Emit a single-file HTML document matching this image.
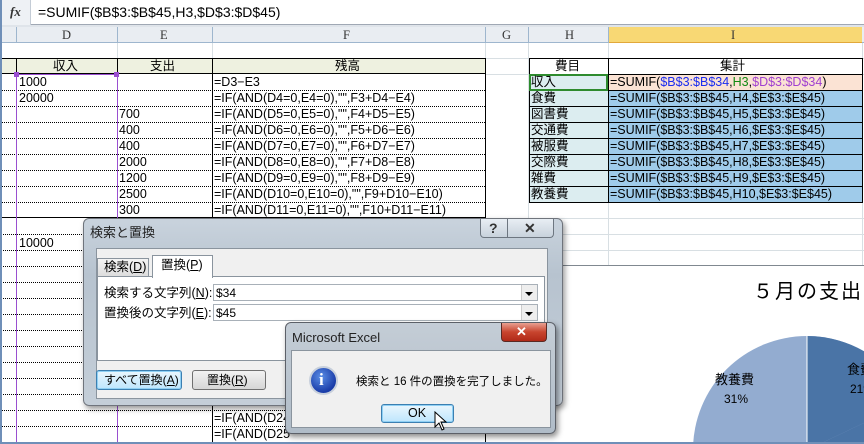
<!DOCTYPE html>
<html><head><meta charset="utf-8"><style>
*{margin:0;padding:0;box-sizing:border-box}
html,body{width:864px;height:444px;overflow:hidden}
body{background:#fff;position:relative;font-family:"Liberation Sans","Noto Sans CJK JP",sans-serif;font-size:12px;color:#000}
.a{position:absolute}
.t{position:absolute;white-space:nowrap;font-size:12.5px;line-height:16px}
.hl{position:absolute;height:0;border-top:1px dotted #000}
.vl{position:absolute;width:0;border-left:1px solid #000}
.g{position:absolute;background:#d8dfe3}
</style></head><body>
<div class="a" style="left:0;top:0;width:864px;height:25px;background:#fff;border-bottom:1px solid #a0a8b4"></div>
<div class="a" style="left:0;top:0;width:31px;height:25px;background:#eef1f5;border-right:1px solid #c4ccd6"></div>
<div class="t" style="left:10px;top:4px;font-family:'Liberation Serif',serif;font-style:italic;font-weight:bold;font-size:13px;color:#333">fx</div>
<div class="t" style="left:38px;top:4px;font-size:14px">=SUMIF($B$3:$B$45,H3,$D$3:$D$45)</div>
<div class="a" style="left:0;top:25px;width:864px;height:2px;background:#dfe4ea"></div>
<div class="a" style="left:0;top:27px;width:864px;height:16px;background:#e9edf2;border-bottom:1px solid #9eb6ce"></div>
<div class="a" style="left:608px;top:27px;width:254px;height:16px;background:#f8d874;border-bottom:1px solid #e2a83a"></div>
<div class="g" style="left:16px;top:27px;width:1px;height:16px;background:#9eb6ce"></div>
<div class="g" style="left:117px;top:27px;width:1px;height:16px;background:#9eb6ce"></div>
<div class="g" style="left:212px;top:27px;width:1px;height:16px;background:#9eb6ce"></div>
<div class="g" style="left:485px;top:27px;width:1px;height:16px;background:#9eb6ce"></div>
<div class="g" style="left:528px;top:27px;width:1px;height:16px;background:#9eb6ce"></div>
<div class="g" style="left:608px;top:27px;width:1px;height:16px;background:#9eb6ce"></div>
<div class="t" style="left:62px;top:27px;font-family:'Liberation Serif',serif;color:#333">D</div>
<div class="t" style="left:160px;top:27px;font-family:'Liberation Serif',serif;color:#333">E</div>
<div class="t" style="left:343px;top:27px;font-family:'Liberation Serif',serif;color:#333">F</div>
<div class="t" style="left:502px;top:27px;font-family:'Liberation Serif',serif;color:#333">G</div>
<div class="t" style="left:565px;top:27px;font-family:'Liberation Serif',serif;color:#333">H</div>
<div class="t" style="left:731px;top:27px;font-family:'Liberation Serif',serif;color:#333">I</div>
<div class="g" style="left:117px;top:43px;width:1px;height:16px"></div>
<div class="g" style="left:212px;top:43px;width:1px;height:16px"></div>
<div class="g" style="left:485px;top:43px;width:1px;height:222px"></div>
<div class="g" style="left:528px;top:43px;width:1px;height:222px"></div>
<div class="g" style="left:608px;top:43px;width:1px;height:222px"></div>
<div class="g" style="left:862px;top:43px;width:1px;height:222px"></div>
<div class="g" style="left:485px;top:58px;width:379px;height:1px"></div>
<div class="g" style="left:485px;top:74px;width:379px;height:1px"></div>
<div class="g" style="left:485px;top:218px;width:379px;height:1px"></div>
<div class="g" style="left:485px;top:234px;width:379px;height:1px"></div>
<div class="g" style="left:485px;top:250px;width:379px;height:1px"></div>
<div class="a" style="left:0;top:58px;width:485px;height:16px;background:#eef1e0;border-top:1px solid #000;border-bottom:1px solid #000"></div>
<div class="t" style="left:53px;top:58px">収入</div>
<div class="t" style="left:150px;top:58px">支出</div>
<div class="t" style="left:335px;top:58px">残高</div>
<div class="vl" style="left:16px;top:58px;height:16px"></div>
<div class="vl" style="left:117px;top:58px;height:386px"></div>
<div class="vl" style="left:212px;top:58px;height:386px"></div>
<div class="vl" style="left:485px;top:58px;height:160px"></div>
<div class="hl" style="left:0;top:90px;width:485px"></div>
<div class="hl" style="left:0;top:106px;width:485px"></div>
<div class="hl" style="left:0;top:122px;width:485px"></div>
<div class="hl" style="left:0;top:138px;width:485px"></div>
<div class="hl" style="left:0;top:154px;width:485px"></div>
<div class="hl" style="left:0;top:170px;width:485px"></div>
<div class="hl" style="left:0;top:186px;width:485px"></div>
<div class="hl" style="left:0;top:202px;width:485px"></div>
<div class="a" style="left:0;top:217px;width:485px;border-top:1px solid #000"></div>
<div class="hl" style="left:0;top:234px;width:120px"></div>
<div class="hl" style="left:0;top:250px;width:90px"></div>
<div class="hl" style="left:0;top:266px;width:90px"></div>
<div class="hl" style="left:0;top:282px;width:90px"></div>
<div class="hl" style="left:0;top:298px;width:90px"></div>
<div class="hl" style="left:0;top:314px;width:90px"></div>
<div class="hl" style="left:0;top:330px;width:90px"></div>
<div class="hl" style="left:0;top:346px;width:90px"></div>
<div class="hl" style="left:0;top:362px;width:90px"></div>
<div class="hl" style="left:0;top:378px;width:90px"></div>
<div class="hl" style="left:0;top:394px;width:90px"></div>
<div class="hl" style="left:0;top:410px;width:485px"></div>
<div class="hl" style="left:0;top:426px;width:485px"></div>
<div class="a" style="left:485px;top:265px;width:1px;height:179px;border-left:1px solid #000"></div>
<div class="a" style="left:16px;top:74px;width:102px;height:370px;border-left:1px solid #9a4fd0;border-right:1px solid #9a4fd0;border-top:1px solid #9a4fd0"></div>
<div class="a" style="left:14px;top:72px;width:5px;height:5px;background:#9a4fd0"></div>
<div class="a" style="left:114px;top:72px;width:5px;height:5px;background:#9a4fd0"></div>
<div class="t" style="left:19px;top:74px">1000</div>
<div class="t" style="left:19px;top:90px">20000</div>
<div class="t" style="left:19px;top:235px">10000</div>
<div class="t" style="left:119px;top:106px">700</div>
<div class="t" style="left:119px;top:122px">400</div>
<div class="t" style="left:119px;top:138px">400</div>
<div class="t" style="left:119px;top:154px">2000</div>
<div class="t" style="left:119px;top:170px">1200</div>
<div class="t" style="left:119px;top:186px">2500</div>
<div class="t" style="left:119px;top:202px">300</div>
<div class="t" style="left:214px;top:74px">=D3−E3</div>
<div class="t" style="left:214px;top:90px">=IF(AND(D4=0,E4=0),"",F3+D4−E4)</div>
<div class="t" style="left:214px;top:106px">=IF(AND(D5=0,E5=0),"",F4+D5−E5)</div>
<div class="t" style="left:214px;top:122px">=IF(AND(D6=0,E6=0),"",F5+D6−E6)</div>
<div class="t" style="left:214px;top:138px">=IF(AND(D7=0,E7=0),"",F6+D7−E7)</div>
<div class="t" style="left:214px;top:154px">=IF(AND(D8=0,E8=0),"",F7+D8−E8)</div>
<div class="t" style="left:214px;top:170px">=IF(AND(D9=0,E9=0),"",F8+D9−E9)</div>
<div class="t" style="left:214px;top:186px">=IF(AND(D10=0,E10=0),"",F9+D10−E10)</div>
<div class="t" style="left:214px;top:202px">=IF(AND(D11=0,E11=0),"",F10+D11−E11)</div>
<div class="t" style="left:214px;top:410px">=IF(AND(D24</div>
<div class="t" style="left:214px;top:426px">=IF(AND(D25</div>
<div class="a" style="left:529px;top:74px;width:79px;height:128px;background:#dcedf0"></div>
<div class="a" style="left:608px;top:74px;width:254px;height:16px;background:#fbe3d4"></div>
<div class="a" style="left:608px;top:90px;width:254px;height:112px;background:#9fcbea"></div>
<div class="a" style="left:529px;top:58px;width:334px;height:145px;border:1px solid #000"></div>
<div class="vl" style="left:608px;top:58px;height:144px"></div>
<div class="a" style="left:529px;top:74px;width:334px;border-top:1px solid #000"></div>
<div class="a" style="left:529px;top:90px;width:334px;border-top:1px solid #000"></div>
<div class="a" style="left:529px;top:106px;width:334px;border-top:1px solid #000"></div>
<div class="a" style="left:529px;top:122px;width:334px;border-top:1px solid #000"></div>
<div class="a" style="left:529px;top:138px;width:334px;border-top:1px solid #000"></div>
<div class="a" style="left:529px;top:154px;width:334px;border-top:1px solid #000"></div>
<div class="a" style="left:529px;top:170px;width:334px;border-top:1px solid #000"></div>
<div class="a" style="left:529px;top:186px;width:334px;border-top:1px solid #000"></div>
<div class="a" style="left:529px;top:74px;width:79px;height:17px;border:2px solid #2e8b2e"></div>
<div class="t" style="left:555px;top:58px">費目</div>
<div class="t" style="left:720px;top:58px">集計</div>
<div class="t" style="left:531px;top:74px">収入</div>
<div class="t" style="left:531px;top:90px">食費</div>
<div class="t" style="left:531px;top:106px">図書費</div>
<div class="t" style="left:531px;top:122px">交通費</div>
<div class="t" style="left:531px;top:138px">被服費</div>
<div class="t" style="left:531px;top:154px">交際費</div>
<div class="t" style="left:531px;top:170px">雑費</div>
<div class="t" style="left:531px;top:186px">教養費</div>
<div class="t" style="left:610px;top:74px">=SUMIF(<span style="color:#1a2bf0">$B$3:$B$34</span>,<span style="color:#118a11">H3</span>,<span style="color:#a040d0">$D$3:$D$34</span>)</div>
<div class="t" style="left:610px;top:90px">=SUMIF($B$3:$B$45,H4,$E$3:$E$45)</div>
<div class="t" style="left:610px;top:106px">=SUMIF($B$3:$B$45,H5,$E$3:$E$45)</div>
<div class="t" style="left:610px;top:122px">=SUMIF($B$3:$B$45,H6,$E$3:$E$45)</div>
<div class="t" style="left:610px;top:138px">=SUMIF($B$3:$B$45,H7,$E$3:$E$45)</div>
<div class="t" style="left:610px;top:154px">=SUMIF($B$3:$B$45,H8,$E$3:$E$45)</div>
<div class="t" style="left:610px;top:170px">=SUMIF($B$3:$B$45,H9,$E$3:$E$45)</div>
<div class="t" style="left:610px;top:186px">=SUMIF($B$3:$B$45,H10,$E$3:$E$45)</div>
<div class="a" style="left:560px;top:265px;width:304px;height:179px;background:#fff;border-top:1px solid #808890;overflow:hidden">
<div class="t" style="left:193px;top:14px;font-size:20px;line-height:24px;letter-spacing:2px">５月の支出</div>
<svg class="a" style="left:0;top:0" width="304" height="179">
<circle cx="247" cy="184" r="114" fill="#93acd0"/>
<path d="M247 184 L247 70 A114 114 0 0 1 350 135 Z" fill="#4a74a6"/>
<path d="M247 184 L361 170 A114 114 0 0 1 361 190 Z" fill="#c0504d"/>
<path d="M247 184 L350 135 A114 114 0 0 1 361 170 Z" fill="#4a74a6"/>
<line x1="247" y1="70" x2="247" y2="184" stroke="#fff" stroke-width="1"/>
<text x="155" y="118" font-size="13" font-family="Liberation Sans,Noto Sans CJK JP,sans-serif">教養費</text>
<text x="164" y="137" font-size="12" font-family="Liberation Sans,sans-serif">31%</text>
<text x="287" y="108" font-size="13" font-family="Liberation Sans,Noto Sans CJK JP,sans-serif">食費</text>
<text x="290" y="127" font-size="12" font-family="Liberation Sans,sans-serif">21%</text>
</svg>
</div>
<div class="a" style="left:0;top:440px;width:864px;height:4px;border-bottom:2px solid #6f8fb8"></div>
<div class="a" style="left:0;top:0;width:2px;height:444px;background:#6f8fb8"></div>
<div class="a" style="left:83px;top:218px;width:480px;height:188px;border:1px solid #6f747c;border-radius:6px;background:linear-gradient(#c9d3dd,#b7c3cf 30%,#c4ced8);box-shadow:2px 3px 6px rgba(0,0,0,.4)"></div>
<div class="t" style="left:90px;top:225px;font-size:13px;color:#222">検索と置換</div>
<div class="a" style="left:480px;top:219px;width:74px;height:19px;border:1px solid #6d7680;border-top:none;border-radius:0 0 4px 4px;background:linear-gradient(#e8eef4,#c8d2dc)"></div>
<div class="a" style="left:507px;top:219px;width:1px;height:19px;background:#6d7680"></div>
<div class="t" style="left:489px;top:220px;font-size:14px;color:#333;font-weight:bold">?</div>
<div class="t" style="left:524px;top:220px;font-size:14px;color:#333;font-weight:bold">✕</div>
<div class="a" style="left:96px;top:248px;width:452px;height:151px;background:#f0f0f0;border:1px solid #8a949e"></div>
<div class="a" style="left:97px;top:258px;width:52px;height:19px;background:linear-gradient(#f4f4f4,#dcdcdc);border:1px solid #8a949e;border-bottom:none"></div>
<div class="t" style="left:104px;top:259px;font-size:12.5px">検索(<u>D</u>)</div>
<div class="a" style="left:152px;top:255px;width:61px;height:23px;background:#fff;border:1px solid #8a949e;border-bottom:none;z-index:2"></div>
<div class="t" style="left:161px;top:257px;font-size:12.5px;z-index:3">置換(<u>P</u>)</div>
<div class="a" style="left:97px;top:276px;width:448px;height:85px;background:#fff;border:1px solid #8a949e"></div>
<div class="t" style="left:104px;top:285px;font-size:12.5px">検索する文字列(<u>N</u>):</div>
<div class="t" style="left:104px;top:305px;font-size:12.5px">置換後の文字列(<u>E</u>):</div>
<div class="a" style="left:213px;top:284px;width:325px;height:17px;border:1px solid #a8b0b8;background:#fff"></div>
<div class="a" style="left:213px;top:304px;width:325px;height:17px;border:1px solid #a8b0b8;background:#fff"></div>
<div class="t" style="left:216px;top:285px;font-size:12px">$34</div>
<div class="t" style="left:216px;top:305px;font-size:12px">$45</div>
<div class="a" style="left:521px;top:285px;width:16px;height:15px;background:#eee;border-left:1px solid #ccc"></div>
<div class="a" style="left:521px;top:305px;width:16px;height:15px;background:#eee;border-left:1px solid #ccc"></div>
<div class="a" style="left:525px;top:292px;border:4px solid transparent;border-top:4px solid #000"></div>
<div class="a" style="left:525px;top:312px;border:4px solid transparent;border-top:4px solid #000"></div>
<div class="a" style="left:96px;top:370px;width:86px;height:20px;border:1px solid #3c7fb1;border-radius:3px;background:linear-gradient(#eaf6fd,#bee6fd);box-shadow:inset 0 0 0 1px #8fd0f4"></div>
<div class="t" style="left:104px;top:372px;font-size:12px">すべて置換(<u>A</u>)</div>
<div class="a" style="left:192px;top:370px;width:74px;height:20px;border:1px solid #707070;border-radius:3px;background:linear-gradient(#f2f2f2,#d6d6d6)"></div>
<div class="t" style="left:207px;top:372px;font-size:12px">置換(<u>R</u>)</div>
<div class="a" style="left:285px;top:322px;width:271px;height:112px;border:1px solid #5c6068;border-radius:6px;background:linear-gradient(#c4cdd6,#b0bcc8);box-shadow:2px 3px 6px rgba(0,0,0,.45)"></div>
<div class="t" style="left:292px;top:330px;font-size:13px;color:#222">Microsoft Excel</div>
<div class="a" style="left:501px;top:323px;width:46px;height:19px;border:1px solid #5a2a24;border-top:none;border-radius:0 0 4px 4px;background:linear-gradient(#e8a090,#c8442e 50%,#b02a18)"></div>
<div class="t" style="left:516px;top:324px;font-size:13px;color:#fff;font-weight:bold">✕</div>
<div class="a" style="left:291px;top:350px;width:260px;height:78px;background:#f0f0f0;border:1px solid #8a949e"></div>
<div class="a" style="left:309px;top:366px;width:29px;height:29px;border-radius:50%;background:radial-gradient(circle at 40% 35%,#5a8ee6,#1a3ca8 70%);border:2px solid #c8d0dc"></div>
<div class="t" style="left:319px;top:370px;font-family:'Liberation Serif',serif;font-weight:bold;font-size:17px;line-height:20px;color:#fff">i</div>
<div class="t" style="left:356px;top:374px;font-size:11.5px">検索と 16 件の置換を完了しました。</div>
<div class="a" style="left:381px;top:404px;width:73px;height:19px;border:1px solid #3c7fb1;border-radius:3px;background:linear-gradient(#eaf6fd,#bee6fd);box-shadow:inset 0 0 0 1px #8fd0f4"></div>
<div class="t" style="left:408px;top:405px;font-size:12.5px">OK</div>
<svg class="a" style="left:434px;top:411px" width="14" height="22"><path d="M1 1 L1 16 L5 12 L8 19 L10 18 L7 11 L12 11 Z" fill="#fff" stroke="#000" stroke-width="1"/></svg>
</body></html>
